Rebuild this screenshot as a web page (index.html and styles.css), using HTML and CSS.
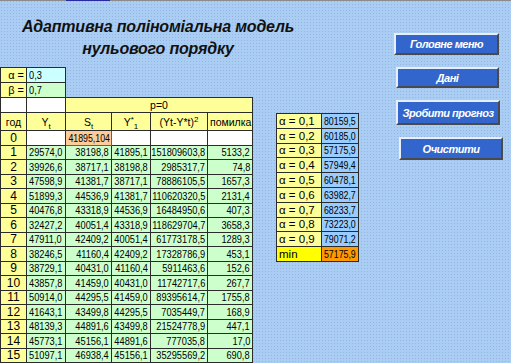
FILE: index.html
```html
<html>
<head>
    <meta charset="utf-8">
    <link rel="stylesheet" href="styles.css">
</head>

<body>
    <div class="topline"><div class="topline-mark"></div></div>
    <div class="page">
        <div class="main">
            <h1 class="title">Адаптивна поліноміальна модель<br/>нульового порядку</h1>
            <table class="sheet">
                <colgroup>
                    <col class="c-year"><col class="c-yt"><col class="c-st"><col class="c-y1"><col class="c-sq"><col class="c-err">
                </colgroup>
                <tr class="r-param">
                    <td class="lbl">&alpha; =</td><td class="alpha"><span>0,3</span></td><td class="blank" colspan="4"></td>
                </tr>
                <tr class="r-param">
                    <td class="lbl">&beta; =</td><td class="beta"><span>0,7</span></td><td class="blank" colspan="4"></td>
                </tr>
                <tr class="r-p">
                    <td class="white"></td><td class="white"></td><td class="head" colspan="4">p=0</td>
                </tr>
                <tr class="r-head">
                    <td class="head">год</td>
                    <td class="head">Y<sub>t</sub></td>
                    <td class="head">S<sub>t</sub></td>
                    <td class="head">Y<sup>*</sup><sub>1</sub></td>
                    <td class="head">(Yt-Y*t)<sup>2</sup></td>
                    <td class="head">помилка</td>
                </tr>
                <tr>
                    <td class="year">0</td><td class="white"></td><td class="num start"><span>41895,104</span></td><td class="white"></td><td class="white"></td><td class="white"></td>
                </tr>
                <tr><td class="year">1</td><td class="yt"><span>29574,0</span></td><td class="num"><span>38198,8</span></td><td class="num"><span>41895,1</span></td><td class="num"><span>151809603,8</span></td><td class="num"><span>5133,2</span></td></tr>
                <tr><td class="year">2</td><td class="yt"><span>39926,6</span></td><td class="num"><span>38717,1</span></td><td class="num"><span>38198,8</span></td><td class="num"><span>2985317,7</span></td><td class="num"><span>74,8</span></td></tr>
                <tr><td class="year">3</td><td class="yt"><span>47598,9</span></td><td class="num"><span>41381,7</span></td><td class="num"><span>38717,1</span></td><td class="num"><span>78886105,5</span></td><td class="num"><span>1657,3</span></td></tr>
                <tr><td class="year">4</td><td class="yt"><span>51899,3</span></td><td class="num"><span>44536,9</span></td><td class="num"><span>41381,7</span></td><td class="num"><span>110620320,5</span></td><td class="num"><span>2131,4</span></td></tr>
                <tr><td class="year">5</td><td class="yt"><span>40476,8</span></td><td class="num"><span>43318,9</span></td><td class="num"><span>44536,9</span></td><td class="num"><span>16484950,6</span></td><td class="num"><span>407,3</span></td></tr>
                <tr><td class="year">6</td><td class="yt"><span>32427,2</span></td><td class="num"><span>40051,4</span></td><td class="num"><span>43318,9</span></td><td class="num"><span>118629704,7</span></td><td class="num"><span>3658,3</span></td></tr>
                <tr><td class="year">7</td><td class="yt"><span>47911,0</span></td><td class="num"><span>42409,2</span></td><td class="num"><span>40051,4</span></td><td class="num"><span>61773178,5</span></td><td class="num"><span>1289,3</span></td></tr>
                <tr><td class="year">8</td><td class="yt"><span>38246,5</span></td><td class="num"><span>41160,4</span></td><td class="num"><span>42409,2</span></td><td class="num"><span>17328786,9</span></td><td class="num"><span>453,1</span></td></tr>
                <tr><td class="year">9</td><td class="yt"><span>38729,1</span></td><td class="num"><span>40431,0</span></td><td class="num"><span>41160,4</span></td><td class="num"><span>5911463,6</span></td><td class="num"><span>152,6</span></td></tr>
                <tr><td class="year">10</td><td class="yt"><span>43857,8</span></td><td class="num"><span>41459,0</span></td><td class="num"><span>40431,0</span></td><td class="num"><span>11742717,6</span></td><td class="num"><span>267,7</span></td></tr>
                <tr><td class="year">11</td><td class="yt"><span>50914,0</span></td><td class="num"><span>44295,5</span></td><td class="num"><span>41459,0</span></td><td class="num"><span>89395614,7</span></td><td class="num"><span>1755,8</span></td></tr>
                <tr><td class="year">12</td><td class="yt"><span>41643,1</span></td><td class="num"><span>43499,8</span></td><td class="num"><span>44295,5</span></td><td class="num"><span>7035449,7</span></td><td class="num"><span>168,9</span></td></tr>
                <tr><td class="year">13</td><td class="yt"><span>48139,3</span></td><td class="num"><span>44891,6</span></td><td class="num"><span>43499,8</span></td><td class="num"><span>21524778,9</span></td><td class="num"><span>447,1</span></td></tr>
                <tr><td class="year">14</td><td class="yt"><span>45773,1</span></td><td class="num"><span>45156,1</span></td><td class="num"><span>44891,6</span></td><td class="num"><span>777035,8</span></td><td class="num"><span>17,0</span></td></tr>
                <tr><td class="year">15</td><td class="yt"><span>51097,1</span></td><td class="num"><span>46938,4</span></td><td class="num"><span>45156,1</span></td><td class="num"><span>35295569,2</span></td><td class="num"><span>690,8</span></td></tr>
            </table>
        </div>

        <table class="alphas">
            <tr><td class="a-lbl">&alpha; = 0,1</td><td class="num a-val"><span>80159,5</span></td></tr>
            <tr><td class="a-lbl">&alpha; = 0,2</td><td class="num a-val"><span>60185,0</span></td></tr>
            <tr><td class="a-lbl">&alpha; = 0,3</td><td class="num a-val"><span>57175,9</span></td></tr>
            <tr><td class="a-lbl">&alpha; = 0,4</td><td class="num a-val"><span>57949,4</span></td></tr>
            <tr><td class="a-lbl">&alpha; = 0,5</td><td class="num a-val"><span>60478,1</span></td></tr>
            <tr><td class="a-lbl">&alpha; = 0,6</td><td class="num a-val"><span>63982,7</span></td></tr>
            <tr><td class="a-lbl">&alpha; = 0,7</td><td class="num a-val"><span>68233,7</span></td></tr>
            <tr><td class="a-lbl">&alpha; = 0,8</td><td class="num a-val"><span>73223,0</span></td></tr>
            <tr><td class="a-lbl">&alpha; = 0,9</td><td class="num a-val"><span>79071,2</span></td></tr>
            <tr><td class="a-lbl min-lbl">min</td><td class="num a-val min-val"><span>57175,9</span></td></tr>
        </table>

        <div class="menu">
            <button class="btn btn-main">Головне меню</button>
            <button class="btn btn-data">Дані</button>
            <button class="btn btn-forecast">Зробити прогноз</button>
            <button class="btn btn-clear">Очистити</button>
        </div>
    </div>
</body>
</html>
```

FILE: styles.css
```css
body {
    margin: 0;
    background-color: #a9cdf3;
    background-image: radial-gradient(circle, #97b3e3 0.7px, transparent 0.9px);
    background-size: 3px 3px;
    font-family: "Liberation Sans", Arial, sans-serif;
    overflow: hidden;
}

.topline {
    height: 1px;
    background: #8c8c8c;
}

    .topline-mark {
        margin-left: 66px;
        width: 44px;
        height: 1px;
        background: #2a2aa0;
    }

.page {
    display: flex;
    align-items: flex-start;
}

.main {
    width: 252px;
    flex: none;
}

.title {
    width: 316px;
    height: 66px;
    box-sizing: border-box;
    margin: 0;
    padding-top: 15px;
    text-align: center;
    font-size: 16px;
    letter-spacing: -0.2px;
    line-height: 22px;
    font-style: italic;
    font-weight: bold;
    color: #111;
}

.sheet,
.alphas {
    border-collapse: collapse;
    table-layout: fixed;
    font-size: 11px;
    color: #000;
}

.sheet {
    width: 252px;
}

    .sheet td {
        border: 1px solid #2b2b2b;
        padding: 0 2px;
        height: 14.5px;
        line-height: 12px;
        white-space: nowrap;
        overflow: hidden;
        color: #000;
    }

.c-year { width: 26px; }
.c-yt { width: 39px; }
.c-st { width: 46px; }
.c-y1 { width: 39px; }
.c-sq { width: 57px; }
.c-err { width: 45px; }

.sheet .r-param td,
.sheet .r-p td {
    height: 15px;
}

.sheet .r-head td {
    height: 18px;
}

.sheet td.blank {
    border: none;
    background: transparent;
}

.lbl {
    background: #ffff99;
    text-align: right;
}

.alpha {
    background: #ccffff;
}

.beta {
    background: #ccffcc;
}

.white {
    background: #fff;
}

.head {
    background: #ffff99;
    text-align: center;
    font-size: 10.5px;
}

    .head sub,
    .head sup {
        font-size: 8px;
        line-height: 0;
    }

.year {
    background: #ffff99;
    text-align: center;
    font-size: 12px;
}

/* numbers are drawn narrow, like Arial Narrow */
.yt span,
.num span,
.alpha span,
.beta span {
    display: inline-block;
    direction: ltr;
    font-size: 11px;
    transform: scaleX(0.84);
    transform-origin: left center;
}

.yt {
    background: #ccffcc;
    text-align: left;
}

.num {
    background: #ccffcc;
    direction: rtl;
    text-align: right;
}

    .num span {
        transform-origin: right center;
    }

.sheet td.start {
    background: #ffcc99;
    border: 1px solid #8a4a6a;
    padding-right: 1px;
}

    .sheet td.start span {
        transform: scaleX(0.8);
    }

.alphas {
    width: 83px;
    margin-left: 24px;
    margin-top: 112px;
    flex: none;
}

    .alphas td {
        border: 1px solid #2b2b2b;
        height: 14.8px;
        padding: 0 2px;
        line-height: 12px;
        white-space: nowrap;
        overflow: hidden;
    }

.a-lbl {
    width: 40px;
    background: #ffff99;
    font-size: 11.5px;
}

.alphas .a-val {
    background: #99ccff;
}

    .alphas .a-val span {
        transform: scaleX(0.8);
    }

.min-lbl {
    background: #ffff00;
}

.alphas .min-val {
    background: #ff9900;
}

.menu {
    display: flex;
    flex-direction: column;
    align-items: flex-start;
    gap: 12px;
    margin-left: 35px;
    margin-top: 32px;
}

.btn {
    display: block;
    width: 105px;
    height: 22px;
    padding: 0;
    background: #3366cc;
    color: #fff;
    font-family: "Liberation Sans", Arial, sans-serif;
    font-size: 11px;
    letter-spacing: -0.5px;
    font-weight: bold;
    font-style: italic;
    border: 2px solid;
    border-color: #e8eef8 #4a4a4a #4a4a4a #e8eef8;
}

.btn-data {
    width: 103px;
    height: 21px;
    margin-left: 2px;
}

.btn-forecast {
    width: 104px;
    height: 25px;
    margin-left: 2px;
}

.btn-clear {
    width: 104px;
    height: 23px;
    margin-left: 5px;
}
```
